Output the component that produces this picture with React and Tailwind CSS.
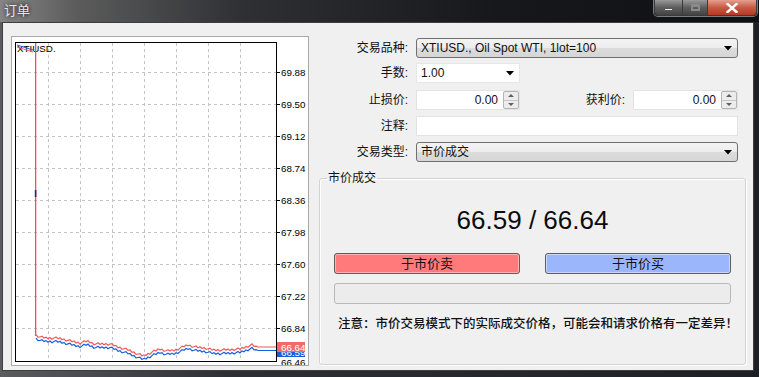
import React from "react";

// key points of the ask line (page coords); bid sits ~4px lower
const askKeys = [
  [36, 335], [40, 337], [47, 338], [55, 338], [63, 339], [70, 341], [80, 343], [87, 341],
  [95, 344], [110, 344], [118, 347], [128, 350], [143, 356], [150, 353], [160, 349],
  [167, 351], [175, 350], [188, 345], [195, 347], [205, 348], [213, 350], [225, 350],
  [240, 349], [248, 346], [252, 345], [256, 347], [276, 347],
];

const interp = (keys, x) => {
  for (let i = 0; i < keys.length - 1; i++) {
    const [x1, y1] = keys[i];
    const [x2, y2] = keys[i + 1];
    if (x >= x1 && x <= x2) return y1 + ((y2 - y1) * (x - x1)) / (x2 - x1);
  }
  return keys[keys.length - 1][1];
};

const buildPath = (keys, off) => {
  let d = "";
  for (let x = 36; x <= 276; x += 2) {
    const flat = x > 256;
    const jitter = flat ? 0 : (((x * 37) % 7) - 3) / 2.5;
    const y = interp(keys, x) + off + jitter;
    d += (x === 36 ? "M" : "L") + x + "," + y.toFixed(1) + " ";
  }
  return d;
};

const levels = ["69.88", "69.50", "69.12", "68.74", "68.36", "67.98", "67.60", "67.22", "66.84"];

const Chart = () => {
  const vx = [48, 80, 112, 144, 176, 208, 240];
  return (
    <div className="w-[298px] h-[330px] border border-[#a9a9a9] bg-white overflow-hidden">
      <svg width="296" height="328" className="block">
        <defs>
          <clipPath id="bidTag">
            <rect x={277} y={352} width={28} height={5} />
          </clipPath>
        </defs>
        <g transform="translate(-12,-37)" fontFamily="Liberation Sans, Arial, sans-serif" fontSize="9.8">
          {vx.map((x) => (
            <line key={x} x1={x + 0.5} y1={43} x2={x + 0.5} y2={361} stroke="#c4c4c4" strokeDasharray="3,3" />
          ))}
          {levels.map((l, i) => (
            <g key={l}>
              <line x1={16} y1={72 + i * 32 + 0.5} x2={276} y2={72 + i * 32 + 0.5} stroke="#c4c4c4" strokeDasharray="3,3" />
              <line x1={276} y1={72 + i * 32 + 0.5} x2={280} y2={72 + i * 32 + 0.5} stroke="#000" />
              <text x={281} y={76 + i * 32} fill="#000">{l}</text>
            </g>
          ))}
          <text x={281} y={365.5} fill="#000">66.46</text>
          <rect x={15.5} y={42.5} width={261} height={319} fill="none" stroke="#000" />
          <text x={17} y={52} fill="#000">XTIUSD.</text>
          <line x1={17} y1={45} x2={33} y2={50} stroke="#1560e0" strokeWidth="1" />
          <line x1={17} y1={47} x2={33} y2={52} stroke="#f05a5a" strokeWidth="1" />
          <rect x={35} y={43} width={1.3} height={293} fill="#e8506e" />
          <rect x={34.8} y={190} width={1.6} height={7} fill="#1a2c70" />
          <path d={buildPath(askKeys, 3.5)} fill="none" stroke="#1560e0" strokeWidth="1.2" />
          <path d={buildPath(askKeys, 0)} fill="none" stroke="#f05a5a" strokeWidth="1.2" />
          <g clipPath="url(#bidTag)">
            <rect x={277} y={347} width={28} height={10} fill="#1e5ad8" />
            <text x={281} y={355.5} fill="#fff">66.59</text>
          </g>
          <rect x={277} y={342} width={28} height={10} fill="#f06a6a" />
          <text x={281} y={350.5} fill="#fff">66.64</text>
        </g>
      </svg>
    </div>
  );
};

const Arrow = () => (
  <svg width="8" height="5" viewBox="0 0 8 5" className="block">
    <path d="M0 0 H8 L4 4.5 Z" fill="#000" />
  </svg>
);

const Combo = ({ value, className = "" }) => (
  <div
    className={`h-[20px] flex items-center justify-between pl-[4px] pr-[5px] rounded-[3px] border border-[#707070] bg-[linear-gradient(#f3f3f3_0%,#ececec_50%,#dcdcdc_51%,#d6d6d6_100%)] ${className}`}
  >
    <span className="leading-[16px]">{value}</span>
    <Arrow />
  </div>
);

const Spin = ({ width }) => (
  <div className={`h-[20px] flex bg-white border border-[#e3e3e3] ${width}`}>
    <div className="flex-1 text-right pr-[5px] leading-[18px]">0.00</div>
    <div className="w-[16px] h-full flex flex-col border border-[#b4b4b4] rounded-[2px] bg-[#ececec]">
      <div className="flex-1 flex items-center justify-center border-b border-[#c8c8c8]">
        <svg width="6" height="3" viewBox="0 0 6 3"><path d="M0 3 L3 0 L6 3 Z" fill="#606060" /></svg>
      </div>
      <div className="flex-1 flex items-center justify-center">
        <svg width="6" height="3" viewBox="0 0 6 3"><path d="M0 0 L6 0 L3 3 Z" fill="#606060" /></svg>
      </div>
    </div>
  </div>
);

const Label = ({ children }) => (
  <div className="w-[89px] text-right leading-[16px] shrink-0">{children}</div>
);

const Row = ({ label, className = "", children }) => (
  <div className={`h-[20px] flex items-center gap-[8px] pr-[8px] ${className}`}>
    <Label>{label}</Label>
    {children}
  </div>
);

const App = () => {
  return (
    <div className="w-[759px] h-[377px] flex flex-col bg-[linear-gradient(90deg,#5a5c60_0%,#2c2f34_30%,#1c1f24_100%)] font-['Liberation_Sans','Noto_Sans_CJK_SC',sans-serif] text-[12px] text-[#111]">
      {/* title bar */}
      <div className="h-[22px] flex items-start justify-between bg-[linear-gradient(90deg,#858585_0%,#5c5c5c_10%,#2e3034_32%,#16181c_65%,#0e1013_100%)]">
        <div className="pl-[4px] pt-[2px] text-[13px] leading-[17px] text-[#e6e6e6] [text-shadow:0_0_4px_#000]">订单</div>
        <div className="mr-[2px] h-[16px] flex rounded-b-[4px] border border-t-0 border-[#3a3a3a] overflow-hidden shadow-[0_0_0_1px_#7c7c7c]">
          <div className="w-[28px] flex items-end justify-center pb-[4px] bg-[linear-gradient(#9a9a9a,#5e5e5e_50%,#434343)] border-r border-[#3a3a3a]">
            <div className="w-[9px] h-[3px] bg-[#f2f2f2] border border-[#555]" />
          </div>
          <div className="w-[25px] flex items-center justify-center bg-[linear-gradient(#9a9a9a,#5e5e5e_50%,#434343)] border-r border-[#3a3a3a]">
            <div className="w-[9px] h-[7px] border-[2px] border-[#8a8a8a] border-t-[3px]" />
          </div>
          <div className="w-[48px] flex items-center justify-center bg-[linear-gradient(#e4a090,#c85a44_50%,#b23a22)]">
            <svg width="12" height="10" viewBox="0 0 12 10">
              <path d="M1.5 1 L10.5 9 M10.5 1 L1.5 9" stroke="#fff" strokeWidth="2.4" strokeLinecap="square" />
            </svg>
          </div>
        </div>
      </div>

      {/* client area */}
      <div className="ml-[2px] w-[752px] h-[349px] border border-[#3e3e3e] bg-[#f0f0f0] flex items-start pl-[8px] pt-[13px]">
        <Chart />

        <div className="ml-[10px] w-[427px] mt-[2px]">
          <Row label="交易品种:">
            <Combo value="XTIUSD., Oil Spot WTI, 1lot=100" className="flex-1" />
          </Row>
          <Row label="手数:" className="mt-[5px]">
            <div className="w-[104px] h-[20px] flex items-center justify-between pl-[4px] pr-[5px] bg-white border border-[#e6e6e6]">
              <span className="leading-[16px]">1.00</span>
              <Arrow />
            </div>
          </Row>
          <Row label="止损价:" className="mt-[7px]">
            <Spin width="w-[104px]" />
            <div className="flex-1 text-right leading-[16px]">获利价:</div>
            <Spin width="w-[105px]" />
          </Row>
          <Row label="注释:" className="mt-[6px]">
            <div className="flex-1 h-[20px] bg-white border border-[#e3e3e3]" />
          </Row>
          <Row label="交易类型:" className="mt-[6px]">
            <Combo value="市价成交" className="flex-1" />
          </Row>

          <fieldset className="mt-[8px] h-[195px] border border-[#d3d3d3] rounded-[3px] shadow-[1px_1px_0_#fff,inset_1px_1px_0_#fff]">
            <legend className="ml-[7px] px-[1px] leading-[16px]">市价成交</legend>
            <div className="mt-[14px] h-[40px] leading-[40px] text-center text-[26px] text-[#0c0c0c]">66.59 / 66.64</div>
            <div className="mt-[13px] px-[14px] flex gap-[25px]">
              <button className="flex-1 h-[21px] rounded-[3px] border border-[#5e5e5e] bg-[#ff7b7b] shadow-[inset_0_0_0_1px_#ffb0b0] leading-[17px] text-[13px]">
                于市价卖
              </button>
              <button className="flex-1 h-[21px] rounded-[3px] border border-[#5e5e5e] bg-[#9bb6fb] shadow-[inset_0_0_0_1px_#c9d7ff] leading-[17px] text-[13px]">
                于市价买
              </button>
            </div>
            <div className="mt-[9px] mx-[14px] h-[21px] rounded-[3px] border border-[#b8b8b8] bg-[#ececec]" />
            <div className="mt-[12px] pl-[18px] leading-[16px] text-[12.5px] font-medium">
              注意：市价交易模式下的实际成交价格，可能会和请求价格有一定差异！
            </div>
          </fieldset>
        </div>
      </div>
    </div>
  );
};

export default App;
